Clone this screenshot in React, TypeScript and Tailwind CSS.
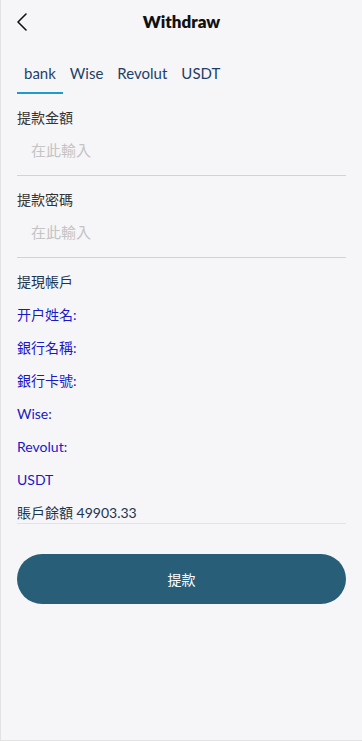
import { useState } from "react";

const tabs = ["bank", "Wise", "Revolut", "USDT"];

const accountRows = ["开户姓名:", "銀行名稱:", "銀行卡號:", "Wise:", "Revolut:", "USDT"];

function BackIcon() {
  return (
    <svg width="12" height="20" viewBox="0 0 12 20" fill="none">
      <path d="M10 2L2 10l8 8" stroke="#111" strokeWidth="1.6" strokeLinecap="round" strokeLinejoin="round" />
    </svg>
  );
}

function InputField({ label }: { label: string }) {
  return (
    <div className="flex flex-col">
      <p className="h-[23px] pt-[2px] text-[14px] leading-[20px] text-[#333]">{label}</p>
      <input
        placeholder="在此輸入"
        className="mt-[10px] h-[22px] bg-transparent pl-[14px] text-[15px] text-[#333] outline-none placeholder:text-[#c4c4c4]"
      />
      <div className="mt-[14px] h-px bg-[#d3d3d3]" />
    </div>
  );
}

export default function App() {
  const [active, setActive] = useState(0);

  return (
    <div
      className="flex min-h-[741px] w-[362px] flex-col border-b border-l border-[#e2e2e2] bg-[#f6f6f8]"
      style={{ fontFamily: 'Lato, "Noto Sans CJK TC", sans-serif' }}
    >
      <header className="relative flex h-[43px] items-center justify-center">
        <button className="absolute left-[15px] top-[12px]">
          <BackIcon />
        </button>
        <h1 className="text-[17px] font-extrabold text-[#111]">Withdraw</h1>
      </header>

      <nav className="mt-[17px] flex px-[16px]">
        {tabs.map((tab, i) => (
          <button
            key={tab}
            onClick={() => setActive(i)}
            className={
              "h-[34px] border-b-2 px-[7px] pb-[6px] text-[15px] leading-[20px] text-[#1e3f68] " +
              (i === active ? "border-[#1e9ad0]" : "border-transparent")
            }
          >
            {tab}
          </button>
        ))}
      </nav>

      <div className="mt-[12px] flex flex-col gap-[12px] px-[16px]">
        <InputField label="提款金額" />
        <InputField label="提款密碼" />
      </div>

      <div className="mt-[14px] flex flex-col px-[16px] text-[14px]">
        <p className="h-[33px] leading-[20px] text-[#1b3551]">提現帳戶</p>
        {accountRows.map((row) => (
          <p key={row} className="h-[33px] leading-[20px] text-[#1c17c9]">
            {row}
          </p>
        ))}
        <p className="h-[20px] leading-[20px] text-[#1b3551]">賬戶餘額 49903.33</p>
        <div className="h-px bg-[#e3e3e6]" />
      </div>

      <div className="mt-[30px] px-[16px]">
        <button className="h-[50px] w-full rounded-full bg-[#285e77] text-[14px] text-white">
          提款
        </button>
      </div>
    </div>
  );
}
